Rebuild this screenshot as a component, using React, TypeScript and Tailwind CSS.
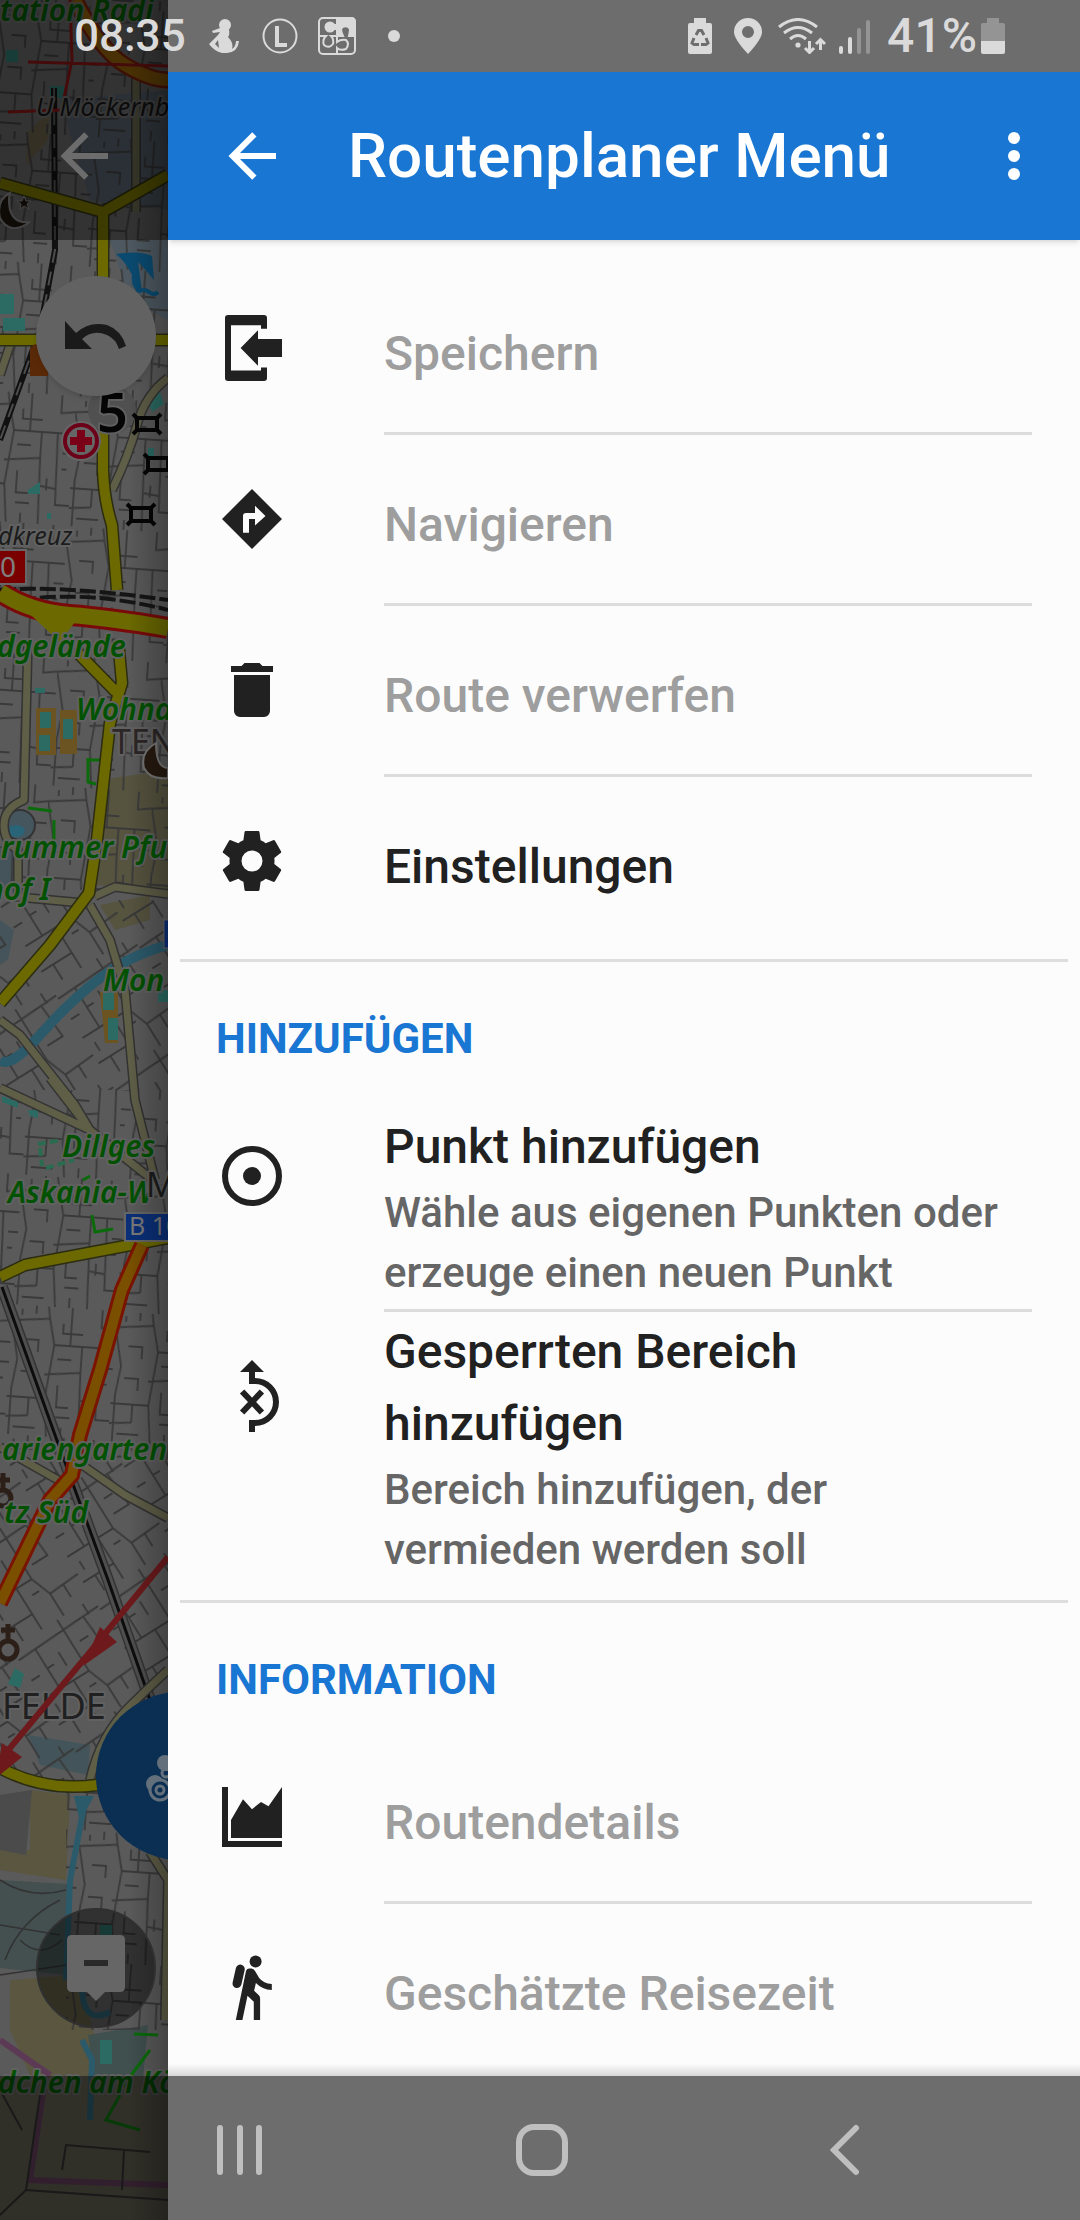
import type { ReactNode } from 'react';

type MenuItem = {
  title: string;
  text?: string;
  icon: ReactNode;
  disabled?: boolean;
  labelClass?: string;
};

type MenuSection = {
  heading?: string;
  items: MenuItem[];
};

const sections: MenuSection[] = [
  {
    items: [
      {
        title: 'Speichern',
        disabled: true,
        icon: (
          <path d="M4 1H16a1 1 0 0 1 1 1V5.6H15V4.4H5V19.5H15V18.5H17V22a1 1 0 0 1-1 1H4a1 1 0 0 1-1-1V2a1 1 0 0 1 1-1zM8.2 12L14 6.1V9H22V15H14V17.9z" />
        ),
      },
      {
        title: 'Navigieren',
        disabled: true,
        icon: <path fillRule="evenodd" d="M12 2L22 12L12 22L2 12zM9 16.6H11V12H13V14.2L16.5 11L13 7.6V10H10a1 1 0 0 0-1 1z" />,
      },
      {
        title: 'Route verwerfen',
        disabled: true,
        icon: <path d="M19,4H15.5L14.5,3H9.5L8.5,4H5V6H19M6,19A2,2 0 0,0 8,21H16A2,2 0 0,0 18,19V7H6V19Z" />,
      },
      {
        title: 'Einstellungen',
        icon: (
          <path d="M12,15.5A3.5,3.5 0 0,1 8.5,12A3.5,3.5 0 0,1 12,8.5A3.5,3.5 0 0,1 15.5,12A3.5,3.5 0 0,1 12,15.5M19.43,12.97C19.47,12.65 19.5,12.33 19.5,12C19.5,11.67 19.47,11.34 19.43,11L21.54,9.37C21.73,9.22 21.78,8.95 21.66,8.73L19.66,5.27C19.54,5.05 19.27,4.96 19.05,5.05L16.56,6.05C16.04,5.66 15.5,5.32 14.87,5.07L14.5,2.42C14.46,2.18 14.25,2 14,2H10C9.75,2 9.54,2.18 9.5,2.42L9.13,5.07C8.5,5.32 7.96,5.66 7.44,6.05L4.95,5.05C4.73,4.96 4.46,5.05 4.34,5.27L2.34,8.73C2.21,8.95 2.27,9.22 2.46,9.37L4.57,11C4.53,11.34 4.5,11.67 4.5,12C4.5,12.33 4.53,12.65 4.57,12.97L2.46,14.63C2.27,14.78 2.21,15.05 2.34,15.27L4.34,18.73C4.46,18.95 4.73,19.03 4.95,18.95L7.44,17.94C7.96,18.34 8.5,18.68 9.13,18.93L9.5,21.58C9.54,21.82 9.75,22 10,22H14C14.25,22 14.46,21.82 14.5,21.58L14.87,18.93C15.5,18.67 16.04,18.34 16.56,17.94L19.05,18.95C19.27,19.03 19.54,18.95 19.66,18.73L21.66,15.27C21.78,15.05 21.73,14.78 21.54,14.63L19.43,12.97Z" />
        ),
      },
    ],
  },
  {
    heading: 'HINZUFÜGEN',
    items: [
      {
        title: 'Punkt hinzufügen',
        text: 'Wähle aus eigenen Punkten oder erzeuge einen neuen Punkt',
        labelClass: 'min-h-[220px] pt-3',
        icon: (
          <>
            <circle cx="12" cy="12" r="9" fill="none" stroke="currentColor" strokeWidth="2" />
            <circle cx="12" cy="12" r="3" />
          </>
        ),
      },
      {
        title: 'Gesperrten Bereich hinzufügen',
        text: 'Bereich hinzufügen, der vermieden werden soll',
        labelClass: 'pt-1 pb-1.5',
        icon: (
          <>
            <path d="M12 0L16 4H13V6A8 8 0 0 1 13 22V24H11V20H13A6 6 0 0 0 13 8H11V4H8z" />
            <path d="M8.7 10.5L15.3 17.5M15.3 10.5L8.7 17.5" stroke="currentColor" strokeWidth="2" />
          </>
        ),
      },
    ],
  },
  {
    heading: 'INFORMATION',
    items: [
      {
        title: 'Routendetails',
        disabled: true,
        icon: <path d="M2 2H4V20H22V22H2zM5 13L9 6.1L12 9.4L15 7L17.5 8.4L22 2V19H5z" />,
      },
      {
        title: 'Geschätzte Reisezeit',
        disabled: true,
        icon: (
          <>
            <circle cx="13.2" cy="3.2" r="2" />
            <path d="M8.1 5.7L7 10.5" stroke="currentColor" strokeWidth="3" strokeLinecap="round" />
            <path d="M10 6.3Q10.3 5.5 11.1 5.5H11.8Q12.6 5.6 13 6.3L14.4 8.7Q15.8 10.5 18.6 10.7V12.7Q15.3 12.4 13.3 10.3L12.7 12.9L14.2 14.3Q14.7 14.8 14.7 15.4V22.7H12.6V16.6L10.5 14.6L8.8 22.7H6.6z" />
          </>
        ),
      },
    ],
  },
];

function MenuRow({ item, last }: { item: MenuItem; last: boolean }) {
  return (
    <li>
      <button disabled={item.disabled} className="flex w-full items-start gap-24 px-12 text-left">
        <span className="flex h-42 w-18 shrink-0 items-center text-[#212121]">
          <svg viewBox="0 0 24 24" fill="currentColor" className="size-18">
            {item.icon}
          </svg>
        </span>
        <span
          className={`flex flex-1 flex-col justify-center ${item.labelClass ?? 'pt-3'} ${
            last ? 'min-h-42' : 'min-h-[171px] border-b-3 border-[#dcdcdc]'
          }`}
        >
          <span
            className={`text-[48px] leading-[72px] font-medium ${item.disabled ? 'text-[#9e9e9e]' : 'text-[#212121]'}`}
          >
            {item.title}
          </span>
          {item.text && <span className="text-[42px] leading-[60px] font-medium text-[#666666]">{item.text}</span>}
        </span>
      </button>
    </li>
  );
}

function ArrowLeft() {
  return (
    <svg viewBox="0 0 24 24" fill="currentColor" className="size-18">
      <path d="M20,11V13H8L13.5,18.5L12.08,19.92L4.16,12L12.08,4.08L13.5,5.5L8,11H20Z" />
    </svg>
  );
}

function StatusBar() {
  return (
    <div className="flex h-18 items-center justify-between pr-[75px] pl-[74px] text-[#dadada]">
      <div className="flex items-center">
        <span className="w-[135px] text-[44px] leading-none font-medium">08:35</span>
        <svg viewBox="0 0 30 34" fill="currentColor" className="h-[34px] w-[30px]">
          <ellipse cx="16" cy="6" rx="6" ry="6" />
          <path d="M11 9L20 11Q21 16 19 18Q25 24 23 30Q27 27 27 22L30 22Q29 33 18 34H13Q5 32 0 25L9 16L11 13L4 14L3 12z" />
          <path d="M9 21L6 25L10 29z" fill="#6d6d6d" />
        </svg>
        <svg viewBox="0 0 36 36" fill="none" stroke="currentColor" className="ml-[23px] size-9">
          <circle cx="18" cy="18" r="16.5" strokeWidth="2" />
          <path d="M15 8V27H25" strokeWidth="4" />
        </svg>
        {/* jigsaw of four pieces, the top right one filled */}
        <svg viewBox="0 0 38 38" fill="none" stroke="currentColor" strokeWidth="2" className="ml-5 size-[38px]">
          <rect x="1" y="1" width="36" height="36" rx="4" />
          <path d="M19 1H33Q37 1 37 5V19H31Q32 15 32 12A5 5 0 0 0 23 12Q23 15 25 19H19z" fill="currentColor" />
          <circle cx="12" cy="10" r="4.5" fill="currentColor" />
          <path d="M12 8H19V12H12z" fill="currentColor" />
          <path d="M1 19H8Q4 23 6 28Q11 32 15 27Q16 22 13 19H19M19 37V31Q22 34 28 32Q32 27 28 23Q23 22 19 25V19" />
        </svg>
        <span className="ml-8 size-3 rounded-full bg-current" />
      </div>
      <div className="flex items-center">
        <svg viewBox="0 0 24 36" fill="currentColor" className="h-9 w-6">
          <path d="M6 0H18V5H22Q24 5 24 7V34Q24 36 22 36H2Q0 36 0 34V7Q0 5 2 5H6z" />
          <path
            d="M8 17L10.5 12.5H13.5L16 17M18 20L20 25L18 26.5H13M11 26.5H6L4 25L6 20"
            fill="none"
            stroke="#6d6d6d"
            strokeWidth="3"
          />
        </svg>
        <svg viewBox="0 0 28 36" fill="currentColor" className="ml-[22px] h-9 w-7">
          <path fillRule="evenodd" d="M14 0A14 14 0 0 1 28 14Q28 21 14 36Q0 21 0 14A14 14 0 0 1 14 0zM14 8A6 6 0 1 0 14 20A6 6 0 1 0 14 8z" />
        </svg>
        <svg viewBox="0 0 48 36" fill="none" stroke="currentColor" strokeWidth="3" className="ml-4 h-9 w-12">
          <path d="M1 9Q20 -6 39 9M6 15Q20 4 34 15M12 21Q20 14 28 21" />
          <circle cx="20" cy="27" r="2.6" fill="currentColor" stroke="none" />
          <path d="M31.5 23V34M27 30L31.5 34.5L36 30M42.5 32V21M38 26L42.5 21.5L47 26" />
        </svg>
        <svg viewBox="0 0 32 36" stroke="currentColor" strokeWidth="4" strokeLinecap="round" className="ml-[13px] h-9 w-8">
          <path d="M2 30V34M11 21V34" />
          <path d="M20 12V34M29 4V34" stroke="#949494" />
        </svg>
        <span className="ml-4 text-[48px] leading-none font-medium">41%</span>
        <svg viewBox="0 0 24 36" className="ml-1 h-9 w-6">
          <path d="M6 0H18V5H22Q24 5 24 7V23H0V7Q0 5 2 5H6z" fill="#949494" />
          <path d="M0 23H24V34Q24 36 22 36H2Q0 36 0 34z" fill="currentColor" />
        </svg>
      </div>
    </div>
  );
}

function SystemNav() {
  return (
    <nav className="flex h-36 items-center justify-center pt-1 pr-[84px] pl-[88px] text-[#bfbfbf]">
      <button aria-label="Letzte Apps" className="flex flex-1 justify-center">
        <svg viewBox="0 0 48 52" stroke="currentColor" strokeWidth="6" strokeLinecap="round" className="h-[52px] w-12">
          <path d="M5 4V48M25 4V48M44 4V48" />
        </svg>
      </button>
      <button aria-label="Startseite" className="flex flex-1 justify-center">
        <svg viewBox="0 0 52 52" fill="none" stroke="currentColor" strokeWidth="6" className="size-[52px]">
          <rect x="3" y="3" width="46" height="46" rx="15" />
        </svg>
      </button>
      <button aria-label="Zurück" className="flex flex-1 justify-center">
        <svg viewBox="0 0 30 52" fill="none" stroke="currentColor" strokeWidth="6" strokeLinecap="round" className="h-[52px] w-[30px]">
          <path d="M26 4L4 26L26 48" />
        </svg>
      </button>
    </nav>
  );
}

function TextHalo({ x, y, size, children, color = '#005200', italic = true, bold = true }: {
  x: number;
  y: number;
  size: number;
  children: string;
  color?: string;
  italic?: boolean;
  bold?: boolean;
}) {
  return (
    <text
      x={x}
      y={y}
      fontSize={size}
      fill={color}
      stroke="#616161"
      strokeWidth="4"
      strokeLinejoin="round"
      paintOrder="stroke"
      fontStyle={italic ? 'italic' : 'normal'}
      fontWeight={bold ? 600 : 400}
      fontFamily="'Noto Sans', sans-serif"
    >
      {children}
    </text>
  );
}

function CityMap() {
  return (
    <svg viewBox="0 0 168 2220" preserveAspectRatio="xMinYMin slice" className="absolute inset-0 size-full">
      <defs>
        <pattern id="streets" width="104" height="130" patternUnits="userSpaceOnUse" patternTransform="rotate(4)">
          <path
            d="M0 16L38 12L44 38H104M0 16L8 54L4 84V130M38 12L36 0M60 0V38M44 38L38 92H0M38 92L42 130M36 68L72 64L74 130M72 38V64M88 38L90 110H104M74 92L90 94M0 112L22 110M50 110H64M90 0V18L104 16M52 16V26H72M14 34H28V46M22 92V110M48 52H62M80 84V96M94 58H104M94 74H99M50 78V100H62M12 66H26V78M8 122H30M56 120V130M10 4V10M24 0V8"
            fill="none"
            stroke="#3a3a3a"
            strokeWidth="1.8"
          />
        </pattern>
        <pattern id="streetsTilt" width="96" height="108" patternUnits="userSpaceOnUse" patternTransform="rotate(-32)">
          <path
            d="M0 14L96 10M0 60H54L62 82L96 80M20 14V60M54 0V60M78 12L80 48H62M36 60V108M62 82V108M0 90H36M14 90V108M38 28V44M78 82V96M84 0V12M0 38H10M62 30H72M8 70V80M46 74H54M28 36H20"
            fill="none"
            stroke="#393939"
            strokeWidth="1.8"
          />
        </pattern>
        <linearGradient id="drawerShade" x1="0" x2="1">
          <stop offset="0" stopColor="#000" stopOpacity="0" />
          <stop offset="1" stopColor="#000" stopOpacity="0.25" />
        </linearGradient>
      </defs>

      <rect width="168" height="2220" fill="#5a5a5a" />
      {/* parks, fields, water */}
      <path d="M60 100L168 90V210L90 200z" fill="#4a5560" />
      <path d="M28 132L50 110L48 140L26 165z" fill="#5c5540" />
      <path d="M110 240H168V320L130 300z" fill="#4d5860" />
      <path d="M100 780L168 770V890L95 885z" fill="#56533f" />
      <path d="M100 905L150 895V920L115 930z" fill="#56533f" />
      <path d="M0 850H15V890H0zM0 920L14 930L8 960L0 965z" fill="#45545a" />
      <path d="M28 1735L90 1745L88 1775L40 1765z" fill="#43555a" />
      <path d="M30 1790L70 1795L66 1880L0 1870V1850L30 1850z" fill="#5a563f" />
      <path d="M0 1795L32 1790L26 1855L0 1850z" fill="#4b4b4b" />
      <path d="M0 1880L68 1884L66 1975L0 1968z" fill="#43504f" />
      <path d="M10 1980L78 1975L96 2040L84 2140L50 2120L10 2030z" fill="#5a563f" />
      <path d="M88 2035L148 2025L140 2110L100 2110z" fill="#40504e" />
      <path d="M0 2076H168V2220H0z" fill="#58564a" />

      <rect width="168" height="890" fill="url(#streets)" />
      <rect y="900" width="168" height="190" fill="url(#streetsTilt)" />
      <rect y="1090" width="168" height="370" fill="url(#streets)" />
      <rect y="1460" width="168" height="320" fill="url(#streetsTilt)" />
      <rect x="66" y="1780" width="102" height="250" fill="url(#streets)" />

      {/* sport fields */}
      <g fill="#2b6b63">
        <path d="M6 50h12v12H6zM50 86h14v12H50zM0 294h14v20H0zM3 318h22v13H3zM28 490l12 -8v12H28zM148 400l12 -8l4 12l-12 8z" />
        <path d="M143 8h10v6h-10zM148 448h6v8h-6zM47 513h4v6h-4z" />
      </g>
      <path d="M36 708H56V755H36zM60 710H77V754H60zM100 992H118V1043H105z" fill="#6b5422" />
      <path d="M40 712h11v16H40zM39 735h11v16H39zM63 719h10v20H63zM103 992h11v18h-11zM108 1018h10v22h-10zM35 688h10v5H35zM100 1925h12v20h-12zM158 990h10v12h-10z" fill="#2b6b63" />
      <path d="M8 1684L15 1668L24 1674L20 1688zM28 1110L38 1110V1118L30 1116zM2 1096L18 1102V1108L2 1102zM100 2040h12v24h-12z" fill="#2b6b63" />
      <path d="M38 1144L62 1140M40 1148L42 1166M46 1168L74 1160" fill="none" stroke="#2b6b50" strokeWidth="4" strokeDasharray="8 4" />
      <path d="M88 758V782L96 784M28 808L52 811M54 820V850M88 760H100M92 1215L95 1232L113 1229M83 1180L90 1176M120 2090L150 2050M134 2034L158 2035M120 2095L106 2120L140 2130" fill="none" stroke="#0b6b0b" strokeWidth="3" />
      <circle cx="20" cy="825" r="15" fill="#46565e" stroke="#333" strokeWidth="2" />
      <ellipse cx="16" cy="831" rx="9" ry="6" fill="#2a6478" />
      <path d="M168 945Q130 955 100 978T40 1035T0 1060" fill="none" stroke="#2b5a6b" strokeWidth="10" />
      <path d="M86 1796L70 1880L66 1980M82 1990Q84 2025 110 2012M82 2040L92 2060L90 2120" fill="none" stroke="#2b5a6b" strokeWidth="6" />
      <path d="M74 1796H94L80 1822z" fill="#2b5a6b" />
      <path d="M0 1880Q30 1900 66 1890M5 1960Q20 1920 60 1900M20 1940Q40 1960 62 1940M0 1925L60 1935M0 1975L66 1965" fill="none" stroke="#333" strokeWidth="1.6" />

      {/* railways */}
      <path d="M54 88L55 250L40 330L0 440" fill="none" stroke="#111" strokeWidth="6" />
      <path d="M54 88L55 250L40 330L0 440" fill="none" stroke="#4c4c4c" strokeWidth="2" strokeDasharray="14 9" />
      <path d="M0 590Q60 585 168 600M20 600Q90 590 168 610" fill="none" stroke="#151515" strokeWidth="4" strokeDasharray="16 4" />
      <path d="M2 1287L55 1435L108 1580L150 1700" fill="none" stroke="#343434" strokeWidth="12" />
      <path d="M2 1287L55 1435L108 1580L150 1700" fill="none" stroke="#4f4f4f" strokeWidth="9" />
      <path d="M2 1287L55 1435L108 1580L150 1700" fill="none" stroke="#0d0d0d" strokeWidth="3" />

      {/* side roads */}
      {['#333', '#5f5e47'].map((color, i) => (
        <g key={color} fill="none" stroke={color} strokeWidth={i === 0 ? 10 : 7} strokeLinejoin="round">
          <path d="M136 75V212M10 345L0 375M168 378Q145 395 137 425T112 490M28 640L24 800Q4 808 4 825T18 850V897L83 903M95 896L115 887L168 894M90 905L110 940L125 990L135 1100L155 1180" />
          <path d="M0 1020L20 1035L75 1105L90 1130L0 1088M50 1078L90 1130L150 1178M75 1460L125 1495L168 1518M0 1447L58 1480M90 1780Q100 1735 130 1706T168 1670M150 1852L168 1880L165 2020" />
        </g>
      ))}

      {/* trunk roads */}
      {['#2c2c12', '#6b6900'].map((color, i) => (
        <g key={color} fill="none" stroke={color} strokeWidth={i === 0 ? 13 : 10} strokeLinejoin="round">
          <path d="M0 183L103 212L168 175M103 212V470Q104 500 112 525L117 590M0 340H168M118 640L122 683L110 723L97 840L89 893L50 945L0 1003M75 650L116 692M0 1277L25 1265L168 1238M0 1768Q45 1792 97 1785" />
        </g>
      ))}
      <path d="M75 0Q100 50 125 65T168 80" fill="none" stroke="#6b1d0c" strokeWidth="17" />
      <path d="M75 0Q100 50 125 65T168 80" fill="none" stroke="#83570a" strokeWidth="12" />
      <path d="M28 62L168 66M70 0L72 60L64 98M8 112L60 110" fill="none" stroke="#7a1414" strokeWidth="3" />
      <path d="M0 592Q30 612 70 615T168 628" fill="none" stroke="#7a0a0a" strokeWidth="22" />
      <path d="M0 592Q30 612 70 615T168 628" fill="none" stroke="#6b6900" strokeWidth="16" />
      <path d="M20 605L60 642L78 618z" fill="#6b6900" />
      <path d="M142 1245L122 1290L100 1370L80 1435L72 1475L50 1500L0 1603" fill="none" stroke="#7a1400" strokeWidth="16" />
      <path d="M142 1245L122 1290L100 1370L80 1435L72 1475L50 1500L0 1603" fill="none" stroke="#7a5000" strokeWidth="10" />
      <path d="M45 2080L30 2180L168 2185M0 2040L50 2075" fill="none" stroke="#5c3a55" strokeWidth="6" />
      <path d="M40 2095L26 2190L168 2200M62 2170L66 2145L150 2152M124 2150L122 2190M0 2215L26 2190M0 2090L22 2130" fill="none" stroke="#2e2e2e" strokeWidth="2" />

      {/* points of interest */}
      <path d="M116 254Q140 250 152 256L154 280Q144 268 138 262L142 292Q130 290 132 275Q126 262 116 254z" fill="#0a4a70" />
      <path d="M136 292Q144 288 149 292T158 292" fill="none" stroke="#0a4a70" strokeWidth="4" />
      <path d="M30 348L35 344L48 350V376H30z" fill="#5a2a08" />
      <circle cx="112" cy="410" r="24" fill="#505050" />
      <circle cx="81" cy="441" r="20" fill="#666" />
      <circle cx="81" cy="441" r="16" fill="none" stroke="#6b0018" strokeWidth="4" />
      <path d="M77 430h8v7h7v8h-7v7h-8v-7h-7v-8h7z" fill="#7a0018" />
      <g fill="none" stroke="#050505" strokeWidth="4">
        <path d="M137 418h20v12h-20zM133 414l5 5M161 414l-5 5M133 434l5 -5M161 434l-5 -5" />
        <path d="M148 458h20v12h-20zM144 454l5 5M144 474l5 -5" />
        <path d="M131 508h20v13h-20zM127 504l5 5M155 504l-5 5M127 525l5 -5M155 525l-5 -5" />
      </g>
      <path d="M10 193Q-4 200 0 218Q10 236 30 222Q14 224 10 210Q8 200 10 193z" fill="#1a140c" stroke="#777" strokeWidth="2" />
      <path d="M24 196l2 5h5l-4 3l2 5l-5 -3l-4 3l1 -5l-4 -3h5z" fill="#1a140c" stroke="#777" />
      <g fill="none" stroke="#2c1f18" strokeWidth="5">
        <circle cx="3" cy="1498" r="8" />
        <path d="M3 1490V1473M-4 1480H10" />
        <circle cx="8" cy="1650" r="9" />
        <path d="M8 1641V1624M1 1630H15" />
      </g>
      <rect x="-4" y="550" width="30" height="34" fill="#7a0000" stroke="#666" strokeWidth="2" />
      <rect x="164" y="920" width="10" height="28" fill="#0a2f78" stroke="#666" />

      {/* labels */}
      <TextHalo x={0} y={21} size={30}>tation Radi</TextHalo>
      <TextHalo x={36} y={116} size={25} color="#151515" bold={false}>U Möckernb</TextHalo>
      <TextHalo x={97} y={432} size={54} color="#050505" italic={false}>5</TextHalo>
      <TextHalo x={-2} y={545} size={25} color="#1c1c1c" bold={false}>dkreuz</TextHalo>
      <text x="0" y="577" fontSize="28" fill="#808080" fontFamily="'Noto Sans', sans-serif">0</text>
      <TextHalo x={-3} y={657} size={30}>dgelände</TextHalo>
      <TextHalo x={76} y={720} size={30}>Wohna</TextHalo>
      <TextHalo x={112} y={754} size={34} color="#2c2626" italic={false} bold={false}>TEN</TextHalo>
      <path d="M156 743Q140 752 144 768Q150 780 168 778V768Q156 768 156 743z" fill="#261a10" stroke="#777" strokeWidth="2" />
      <TextHalo x={1} y={858} size={30}>rummer Pfu</TextHalo>
      <TextHalo x={-14} y={900} size={30}>hof I</TextHalo>
      <TextHalo x={103} y={991} size={30}>Mon</TextHalo>
      <TextHalo x={62} y={1157} size={30}>Dillges</TextHalo>
      <TextHalo x={8} y={1203} size={30}>Askania-W</TextHalo>
      <TextHalo x={146} y={1197} size={34} color="#1c1c1c" italic={false} bold={false}>M</TextHalo>
      <rect x="125" y="1213" width="50" height="28" fill="#0a2f78" stroke="#666" strokeWidth="2" />
      <text x="129" y="1235" fontSize="25" fill="#7a7a7a" fontFamily="'Noto Sans', sans-serif">B 10</text>
      <TextHalo x={2} y={1460} size={30}>ariengarten</TextHalo>
      <TextHalo x={4} y={1523} size={30}>tz Süd</TextHalo>
      <TextHalo x={2} y={1719} size={36} color="#202020" italic={false} bold={false}>FELDE</TextHalo>
      <TextHalo x={-2} y={2093} size={30}>dchen am Kö</TextHalo>

      {/* planned route */}
      <path d="M168 1557L90 1652L0 1760" fill="none" stroke="#6e1a1c" strokeWidth="6" />
      <path d="M83 1666L100 1627L117 1642zM-4 1778L2 1743L22 1757z" fill="#6e1a1c" />

      <rect width="168" height="240" opacity="0.43" />
      <rect y="2076" width="168" height="144" opacity="0.45" />
      <rect x="128" width="40" height="2220" fill="url(#drawerShade)" />
    </svg>
  );
}

// Strip of the dimmed map screen that stays visible beside the drawer
function MapStrip() {
  return (
    <div className="relative w-42 shrink-0 overflow-hidden">
      <CityMap />
      <button aria-label="Karte verlassen" className="absolute top-30 left-12 text-[#6c6c6c]">
        <ArrowLeft />
      </button>
      <button
        aria-label="Rückgängig"
        className="absolute top-[276px] left-9 flex size-30 items-center justify-center rounded-full bg-[#626262] shadow-md"
      >
        <svg viewBox="0 0 62 30" className="h-[30px] w-[62px]">
          <path d="M0 0V28H27L17 18Q28 8 42 14Q51 18 54 28L61 25Q56 9 42 4Q24 0 11 12z" fill="#1a1a1a" />
        </svg>
      </button>
      <button aria-label="Ansicht" className="absolute top-[1692px] left-24 size-42 rounded-full bg-[#0a2f52]">
        <svg viewBox="0 0 168 168" fill="none" className="size-full">
          <circle cx="59" cy="92" r="9" fill="#63707c" />
          <circle cx="69" cy="71" r="8" fill="#63707c" />
          <circle cx="64" cy="98" r="10" fill="#0a2f52" stroke="#63707c" strokeWidth="3" />
          <circle cx="64" cy="98" r="4" stroke="#63707c" strokeWidth="3" />
          <circle cx="70" cy="81" r="4" stroke="#63707c" strokeWidth="3" />
        </svg>
      </button>
      <button
        aria-label="Notiz"
        className="absolute top-[1908px] left-9 flex size-30 items-center justify-center rounded-full border-2 border-[#303030] bg-black/45"
      >
        <svg viewBox="0 0 58 66" className="h-[66px] w-[58px]">
          <path d="M5 0H53Q58 0 58 5V52Q58 57 53 57H38L29 66L20 57H5Q0 57 0 52V5Q0 0 5 0z" fill="#666" />
          <path d="M17 28H41" stroke="#2a2a2a" strokeWidth="6" />
        </svg>
      </button>
    </div>
  );
}

export default function App() {
  return (
    <div className="grid min-h-screen bg-[#fcfcfc] font-[Roboto,'Noto_Sans',sans-serif]">
      <div className="col-start-1 row-start-1 flex">
        <MapStrip />
        <div className="flex flex-1 flex-col pb-36">
          <div className="h-18 bg-[#6d6d6d]" />
          <header className="z-10 flex h-42 items-center bg-[#1976d2] pr-[30px] pl-12 text-white shadow-md">
            <button aria-label="Zurück">
              <ArrowLeft />
            </button>
            <h1 className="flex-1 pl-[60px] text-[62px] leading-[72px] font-medium">Routenplaner Menü</h1>
            <button aria-label="Weitere Optionen">
              <svg viewBox="0 0 24 24" fill="currentColor" className="size-18">
                <circle cx="12" cy="6" r="2" />
                <circle cx="12" cy="12" r="2" />
                <circle cx="12" cy="18" r="2" />
              </svg>
            </button>
          </header>

          <main className="flex-1 pt-6">
            {sections.map((section, i) => (
              <section key={section.heading ?? 'route'}>
                {i > 0 && <hr className="mx-3 mt-[14px] border-t-3 border-[#dedede]" />}
                {section.heading && (
                  <h2 className="flex h-[130px] items-center px-12 pt-6 text-[42px] leading-none font-bold text-[#1976d2]">
                    {section.heading}
                  </h2>
                )}
                <ul>
                  {section.items.map((item, n) => (
                    <MenuRow key={item.title} item={item} last={n === section.items.length - 1} />
                  ))}
                </ul>
              </section>
            ))}
          </main>
        </div>
      </div>

      {/* System bars sit on top of both the map and the drawer */}
      <div className="z-20 col-start-1 row-start-1 flex flex-col justify-between">
        <StatusBar />
        <div className="flex flex-col">
          <div className="ml-42 h-3 bg-linear-to-b from-transparent to-black/15" />
          <div className="bg-linear-to-r from-transparent from-[168px] to-[#6d6d6d] to-[168px]">
            <SystemNav />
          </div>
        </div>
      </div>
    </div>
  );
}
